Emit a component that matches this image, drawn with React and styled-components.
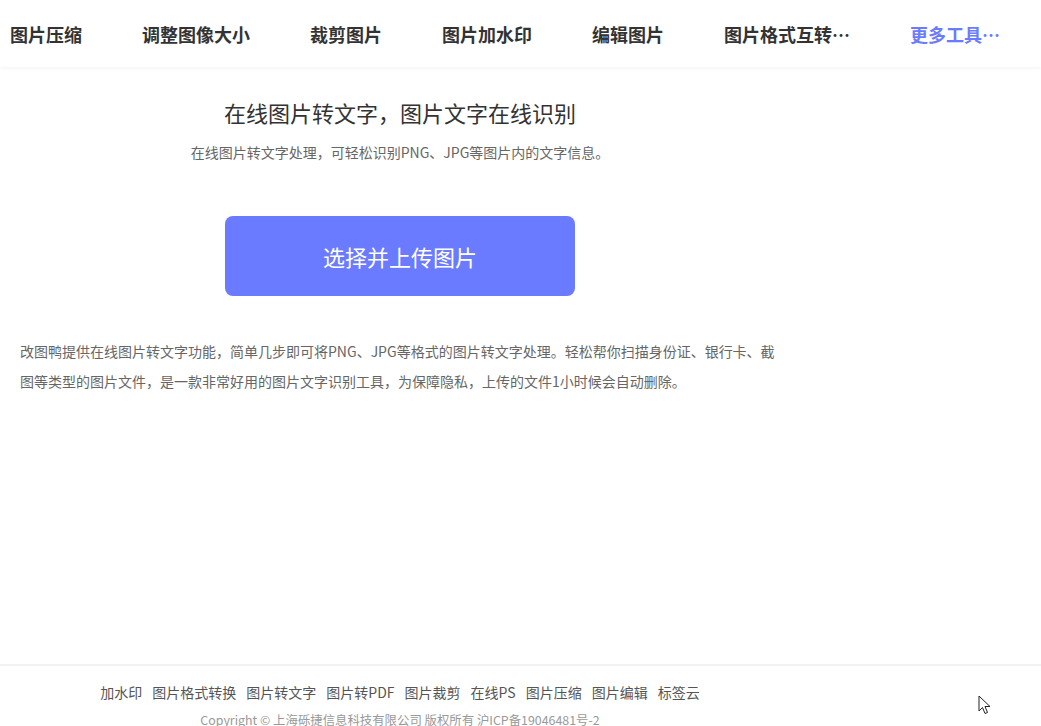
import styled, { createGlobalStyle } from 'styled-components';

const GlobalStyle = createGlobalStyle`
  html, body {
    margin: 0;
    padding: 0;
    background: #fff;
    font-family: "Noto Sans CJK SC", "Noto Sans", sans-serif;
  }
  * { box-sizing: border-box; }
`;

const navItems = ['图片压缩', '调整图像大小', '裁剪图片', '图片加水印', '编辑图片', '图片格式互转…'];
const footerLinks = ['加水印', '图片格式转换', '图片转文字', '图片转PDF', '图片裁剪', '在线PS', '图片压缩', '图片编辑', '标签云'];

const App = () => {
    return (
        <>
            <GlobalStyle />
            <Page>
                <Nav>
                    {navItems.map((item) => (
                        <NavItem key={item}>{item}</NavItem>
                    ))}
                    <NavItem $accent>更多工具…</NavItem>
                </Nav>

                <Main>
                    <Content>
                        <Title>在线图片转文字，图片文字在线识别</Title>
                        <Subtitle>在线图片转文字处理，可轻松识别PNG、JPG等图片内的文字信息。</Subtitle>
                        <UploadButton>选择并上传图片</UploadButton>
                        <Description>
                            改图鸭提供在线图片转文字功能，简单几步即可将PNG、JPG等格式的图片转文字处理。轻松帮你扫描身份证、银行卡、截图等类型的图片文件，是一款非常好用的图片文字识别工具，为保障隐私，上传的文件1小时候会自动删除。
                        </Description>
                    </Content>
                </Main>

                <Footer>
                    <FooterInner>
                        <FooterLinks>
                            {footerLinks.map((link) => (
                                <FooterLink key={link}>{link}</FooterLink>
                            ))}
                        </FooterLinks>
                        <Copyright>Copyright © 上海砾捷信息科技有限公司 版权所有 沪ICP备19046481号-2</Copyright>
                    </FooterInner>
                </Footer>

                <Cursor width="14" height="20" viewBox="0 0 14 20">
                    <path d="M1 1 L1 16 L4.5 12.5 L7 18.5 L9.5 17.5 L7 11.5 L12 11.5 Z" fill="#fff" stroke="#222" strokeWidth="1" strokeLinejoin="round" />
                </Cursor>
            </Page>
        </>
    )
}

export default App;

// LAYOUT //
const Page = styled.div`
  position: relative;
  width: 100%;
  height: 726px;
  overflow: hidden;
`;

const Nav = styled.nav`
  height: 67px;
  display: flex;
  align-items: center;
  gap: 60px;
  padding-left: 10px;
  background: #fff;
  box-shadow: 0 2px 3px rgba(0, 0, 0, 0.035);
  position: relative;
  z-index: 1;
`;

const NavItem = styled.a`
  font-size: 18px;
  font-weight: 700;
  color: ${(p) => (p.$accent ? '#6b7bff' : '#333')};
  white-space: nowrap;
  cursor: pointer;
`;

const Main = styled.main`
  height: 597px;
`;

const Content = styled.div`
  width: 800px;
  padding: 0 20px;
  display: flex;
  flex-direction: column;
  align-items: center;
`;

const Title = styled.h1`
  margin: 30px 0 0;
  font-size: 22px;
  line-height: 30px;
  font-weight: 400;
  color: #333;
`;

const Subtitle = styled.p`
  margin: 15px 0 0;
  font-size: 14px;
  line-height: 20px;
  color: #666;
`;

const UploadButton = styled.button`
  margin-top: 54px;
  width: 350px;
  height: 80px;
  border: none;
  border-radius: 8px;
  background: #6b7bff;
  color: #fff;
  font-family: inherit;
  font-size: 22px;
  cursor: pointer;
`;

const Description = styled.p`
  align-self: stretch;
  margin: 40px 0 0;
  font-size: 14px;
  line-height: 30px;
  color: #666;
`;

const Footer = styled.footer`
  border-top: 2px solid #f2f2f5;
`;

const FooterInner = styled.div`
  width: 800px;
  display: flex;
  flex-direction: column;
  align-items: center;
  padding-top: 16px;
`;

const FooterLinks = styled.div`
  display: flex;
  gap: 10px;
`;

const FooterLink = styled.a`
  font-size: 14px;
  line-height: 20px;
  color: #555;
`;

const Copyright = styled.div`
  margin-top: 8px;
  font-size: 12.4px;
  line-height: 20px;
  color: #999;
`;

const Cursor = styled.svg`
  position: absolute;
  left: 978px;
  top: 695px;
`;
